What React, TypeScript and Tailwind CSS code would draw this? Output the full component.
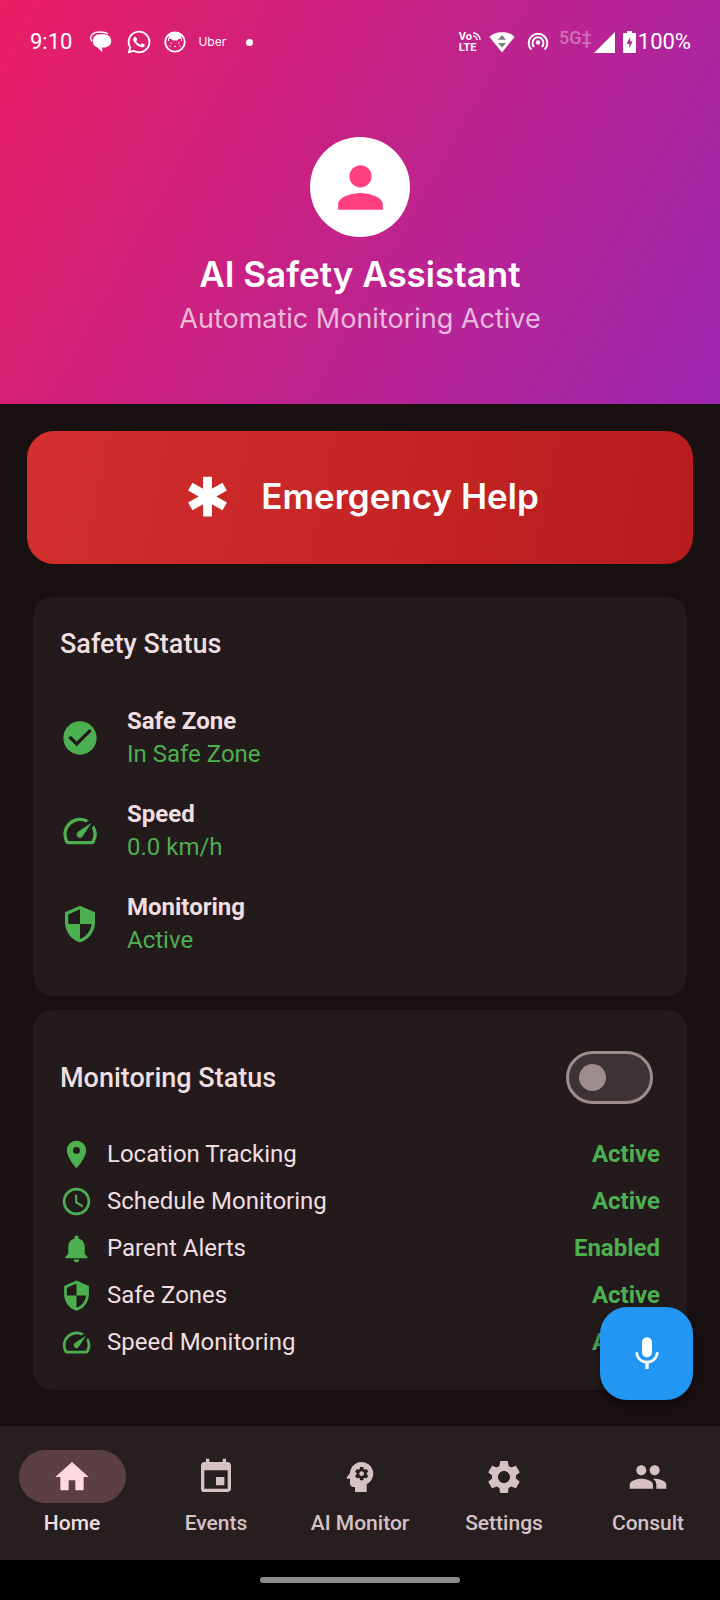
import type { ReactNode } from 'react';
import type { IconType } from 'react-icons';
import {
  MdAccessTime,
  MdCheckCircle,
  MdEmergency,
  MdEvent,
  MdHome,
  MdLocationOn,
  MdMic,
  MdNotifications,
  MdPeople,
  MdPerson,
  MdPsychology,
  MdSecurity,
  MdSettings,
  MdSpeed,
} from 'react-icons/md';
import { FaWhatsapp } from 'react-icons/fa';

type StatusItem = { icon: IconType; title: string; value: string };

const safety: StatusItem[] = [
  { icon: MdCheckCircle, title: 'Safe Zone', value: 'In Safe Zone' },
  { icon: MdSpeed, title: 'Speed', value: '0.0 km/h' },
  { icon: MdSecurity, title: 'Monitoring', value: 'Active' },
];

const monitors: StatusItem[] = [
  { icon: MdLocationOn, title: 'Location Tracking', value: 'Active' },
  { icon: MdAccessTime, title: 'Schedule Monitoring', value: 'Active' },
  { icon: MdNotifications, title: 'Parent Alerts', value: 'Enabled' },
  { icon: MdSecurity, title: 'Safe Zones', value: 'Active' },
  { icon: MdSpeed, title: 'Speed Monitoring', value: 'Active' },
];

const tabs: { icon: IconType; label: string }[] = [
  { icon: MdHome, label: 'Home' },
  { icon: MdEvent, label: 'Events' },
  { icon: MdPsychology, label: 'AI Monitor' },
  { icon: MdSettings, label: 'Settings' },
  { icon: MdPeople, label: 'Consult' },
];

function StatusBar() {
  return (
    <div className="flex h-[84px] items-center justify-between pr-[29px] pl-[30px] text-white">
      <div className="flex items-center">
        <span className="text-[22px] leading-6">9:10</span>
        <svg viewBox="0 0 22 22" className="ml-[18px] size-[22px]" aria-hidden="true">
          <path d="M2 10.500C.2 8.500.2 5.200 2.400 3.200 4.200 1.500 6.800 1 9.500 1c3.500 0 6.500.5 8.500 2" fill="none" stroke="currentColor" strokeWidth="1.300" />
          <path d="M9.500 3.300h4c4.500 0 7.700 2.800 7.700 6.700s-3.200 6.600-7.700 6.600h-1.300v4.600L7.500 16.400C4.700 15.500 2.800 13.300 2.800 10.200 2.800 6.200 5.500 3.300 9.500 3.300z" fill="currentColor" />
        </svg>
        <FaWhatsapp className="ml-[14px] size-[26px]" aria-hidden="true" />
        <svg viewBox="0 0 22 22" className="ml-3 size-[22px]" aria-hidden="true">
          <circle cx="11" cy="11" r="9.700" fill="none" stroke="currentColor" strokeWidth="1.800" />
          <path d="M4.500 4 8 1h6l3.500 3-.5 4-1.500-.5L13 9.500H9L6.500 7.500 5 8z" fill="currentColor" />
          <path d="M4.500 7v3M17.500 7v3M6.500 12h1.500M14 12h1.500M5.500 15h1.200M15.300 15h1.200M10 15.500h2" stroke="currentColor" />
        </svg>
        <span className="ml-3 font-[Inter,sans-serif] text-[12px] leading-4">Uber</span>
        <span className="ml-5 size-[7px] rounded-full bg-white" />
      </div>
      <div className="flex items-center">
        <div className="flex flex-col text-[11px] leading-[11px] font-bold">
          <span className="flex items-center">
            Vo
            <svg viewBox="0 0 9 9" className="size-[9px]" aria-hidden="true">
              <path d="M1 1a7 7 0 0 1 7 7M1 4a4 4 0 0 1 4 4" fill="none" stroke="currentColor" strokeWidth="1.500" />
            </svg>
          </span>
          <span>LTE</span>
        </div>
        <svg viewBox="0 0 26 22" className="ml-2 h-[22px] w-[26px]" aria-hidden="true">
          <path d="M.500 6C5-.5 21-.5 25.500 6L13 21.500z" fill="currentColor" />
          <path d="M9 8.700 13 4l4 4.700zM9 12h8l-4 4.500z" fill="#7d7d7d" />
        </svg>
        <svg viewBox="0 0 22 22" className="ml-3 size-[22px]" aria-hidden="true">
          <circle cx="11" cy="11.500" r="2.200" fill="currentColor" />
          <path d="M4.300 18.600a9.300 9.300 0 1 1 13.400 0M7.200 15.800a5.500 5.500 0 1 1 7.600 0" fill="none" stroke="currentColor" strokeWidth="2" />
        </svg>
        <span className="ml-[10px] pb-2 text-[18px] leading-5 font-medium text-white/35">5G‡</span>
        <svg viewBox="0 0 21 21" className="ml-[2px] size-[21px]" aria-hidden="true">
          <path d="M21 0v21H0z" fill="currentColor" />
        </svg>
        <svg viewBox="0 0 13 22" className="ml-2 h-[22px] w-[13px]" aria-hidden="true">
          <path d="M4 0h5v2h3a1 1 0 0 1 1 1v18a1 1 0 0 1-1 1H1a1 1 0 0 1-1-1V3a1 1 0 0 1 1-1h3z" fill="currentColor" />
          <path d="M7.300 6 3.500 12.700h2.700V17L9.700 10.500H7.300z" fill="#ae2698" />
        </svg>
        <span className="ml-[2px] text-[22px] leading-6">100%</span>
      </div>
    </div>
  );
}

function Card({ children }: { children: ReactNode }) {
  return <section className="rounded-[20px] bg-[#231a1b] px-[27px]">{children}</section>;
}

export default function App() {
  return (
    <div className="flex min-h-screen flex-col bg-[#191012] font-[Roboto,sans-serif] text-[#f0dee0]">
      <header className="bg-[linear-gradient(119deg,#e91e63,#9c27b0)] pb-[67px]">
        <StatusBar />
        <div className="flex flex-col items-center pt-[53px] text-center">
          <div className="flex size-[100px] items-center justify-center rounded-full bg-white">
            <MdPerson className="size-[67px] text-[#ff4081]" aria-hidden="true" />
          </div>
          <h1 className="mt-[17px] font-[Inter,sans-serif] text-[35px] leading-10 font-semibold text-white">
            AI Safety Assistant
          </h1>
          <p className="mt-[6px] font-[Inter,sans-serif] text-[27px] leading-[37px] text-white/70">
            Automatic Monitoring Active
          </p>
        </div>
      </header>

      <main className="relative flex-1 px-[27px] pt-[27px] pb-9">
        <button
          type="button"
          className="flex h-[133px] w-full items-center justify-center gap-[27px] rounded-[27px] bg-[linear-gradient(101deg,#d32f2f,#b71c1c)] pb-[2px] font-[Inter,sans-serif] text-[35px] font-semibold text-white"
        >
          <MdEmergency className="size-[53px]" aria-hidden="true" />
          Emergency Help
        </button>

        <div className="mt-[33px] flex flex-col gap-[14px] px-[6px]">
          <Card>
            <h2 className="pt-[27px] text-[27px] leading-[40px] font-medium">Safety Status</h2>
            <ul className="mt-[27px] flex flex-col pb-[26px]">
              {safety.map(({ icon: Icon, title, value }) => (
                <li key={title} className="flex h-[93px] items-center gap-[27px]">
                  <Icon className="size-10 text-[#4caf50]" aria-hidden="true" />
                  <div className="text-[24px] leading-[33px]">
                    <p className="font-bold">{title}</p>
                    <p className="text-[#4caf50]">{value}</p>
                  </div>
                </li>
              ))}
            </ul>
          </Card>

          <Card>
            <label className="flex items-center justify-between pt-[41px] pr-[7px] text-[27px] leading-[40px] font-medium">
              Monitoring Status
              <input
                type="checkbox"
                role="switch"
                className="flex h-[53px] w-[87px] appearance-none items-center rounded-full border-[3px] border-[#9f8c8f] bg-[#3d3234] pl-[10px] before:size-[27px] before:rounded-full before:bg-[#9f8c8f] checked:justify-end checked:pr-[10px]"
              />
            </label>
            <ul className="mt-[27px] flex flex-col pb-6">
              {monitors.map(({ icon: Icon, title, value }) => (
                <li key={title} className="flex h-[47px] items-center text-[24px] leading-[33px]">
                  <Icon className="size-[33px] text-[#4caf50]" aria-hidden="true" />
                  <span className="ml-[14px] flex-1">{title}</span>
                  <span className="font-bold text-[#4caf50]">{value}</span>
                </li>
              ))}
            </ul>
          </Card>
        </div>

        <button
          type="button"
          aria-label="Voice assistant"
          className="absolute right-[27px] bottom-[26px] flex size-[93px] items-center justify-center rounded-[27px] bg-[#2196f3] text-white shadow-[0_5px_10px_rgba(0,0,0,0.5)]"
        >
          <MdMic className="size-10" aria-hidden="true" />
        </button>
      </main>

      <nav className="grid h-[134px] grid-cols-5 bg-[#271e20]">
        {tabs.map(({ icon: Icon, label }, index) => (
          <a
            key={label}
            href={`#${label}`}
            aria-current={index === 0 ? 'page' : undefined}
            className="group flex flex-col items-center pt-6 text-[21px] leading-6 font-medium text-[#d6c2c5] aria-[current=page]:text-[#f0dee0]"
          >
            <span className="flex h-[53px] w-[107px] items-center justify-center rounded-full group-aria-[current=page]:bg-[#5c3f45] group-aria-[current=page]:text-[#ffd9df]">
              <Icon className="size-10" aria-hidden="true" />
            </span>
            <span className="mt-2">{label}</span>
          </a>
        ))}
      </nav>
      <div className="flex h-10 items-center justify-center bg-black">
        <span className="h-[6px] w-[200px] rounded-full bg-[#8c8c8c]" />
      </div>
    </div>
  );
}
